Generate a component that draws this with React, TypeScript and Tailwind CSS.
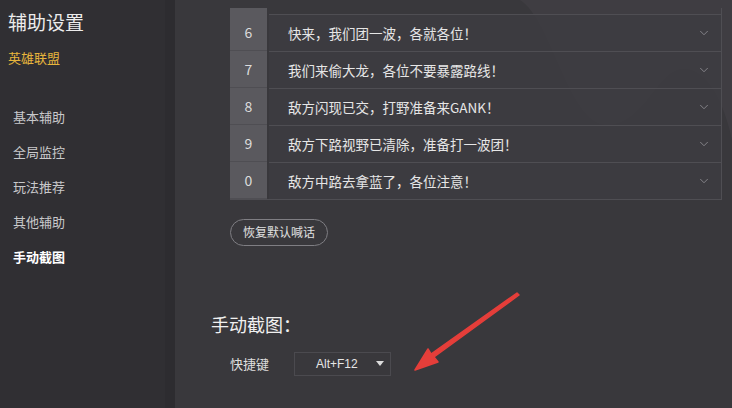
import { ChevronDown } from "lucide-react";

const font = { fontFamily: '"Noto Sans CJK SC", "Noto Sans", sans-serif' };

const shouts = [
  { key: "6", text: "快来，我们团一波，各就各位！" },
  { key: "7", text: "我们来偷大龙，各位不要暴露路线！" },
  { key: "8", text: "敌方闪现已交，打野准备来GANK！" },
  { key: "9", text: "敌方下路视野已清除，准备打一波团！" },
  { key: "0", text: "敌方中路去拿蓝了，各位注意！" },
];

const navItems = ["基本辅助", "全局监控", "玩法推荐", "其他辅助"];

function Sidebar() {
  return (
    <aside className="w-[175px] shrink-0 bg-[#302f33] border-r-[10px] border-[#2d2c30] flex flex-col">
      <h1 className="pl-[8px] pt-[9px] text-[19px] leading-[26px] text-[#ececec]">
        辅助设置
      </h1>
      <p className="pl-[8px] mt-[14px] text-[13px] leading-[18px] text-[#e7b53c]">
        英雄联盟
      </p>
      <nav className="mt-[41px] flex flex-col gap-[17px] pl-[13px]">
        {navItems.map((item) => (
          <span key={item} className="text-[13px] leading-[18px] text-[#c9c9cb]">
            {item}
          </span>
        ))}
        <span className="text-[13px] leading-[18px] font-bold text-white">
          手动截图
        </span>
      </nav>
    </aside>
  );
}

function ShoutTable() {
  return (
    <div className="relative ml-[55px] mr-[10px] mt-[8px]">
      <div className="flex flex-col border-r border-b border-[#4f4e53]">
        <div className="flex h-[6px]">
          <div className="w-[37px] bg-[#5a595e]" />
          <div className="flex-1" />
        </div>
        {shouts.map((row) => (
          <div key={row.key} className="flex h-[37px]">
            <div className="w-[37px] bg-[#5a595e] border-b border-[#4f4e53] flex items-center justify-center text-[14px] text-[#dcdcdc]">
              {row.key}
            </div>
            <div className="flex-1 ml-[2px] border-t border-[#4f4e53] bg-[#3d3c41]/80 flex items-center justify-between pl-[19px] pr-[10px]">
              <span className="text-[13.5px] text-[#e6e6e6]">{row.text}</span>
              <ChevronDown size={14} strokeWidth={1.5} className="text-[#8d8c91]" />
            </div>
          </div>
        ))}
      </div>
    </div>
  );
}

function Arrow() {
  return (
    <svg
      className="absolute left-[225px] top-[290px]"
      width="130"
      height="90"
      viewBox="0 0 130 90"
    >
      <path
        d="M119 5 L34 67 L38 72 L15 80 L28 59 L31 64 L117 3 Z"
        fill="#e53e3a"
        stroke="#e53e3a"
        strokeWidth="1.5"
        strokeLinejoin="round"
      />
    </svg>
  );
}

export default function App() {
  return (
    <div className="w-[732px] h-[408px] flex overflow-hidden bg-[#39383c]" style={font}>
      <Sidebar />
      <main className="relative flex-1 flex flex-col">
        <svg
          className="absolute left-[345px] top-0"
          width="212"
          height="210"
          viewBox="0 0 260 210"
          preserveAspectRatio="none"
        >
          <path
            d="M0 0 C40 20 60 130 110 125 C160 120 170 60 210 70 C240 78 255 120 260 140 L260 0 Z"
            fill="#4a494e"
            opacity="0.35"
          />
        </svg>
        <ShoutTable />
        <div className="relative ml-[55px] mt-[18px]">
          <button className="h-[27px] px-[12px] rounded-full border border-[#7f7e83] text-[12px] text-[#e0e0e0]">
            恢复默认喊话
          </button>
        </div>
        <h2 className="relative ml-[36px] mt-[65px] text-[18px] leading-[26px] text-[#f0f0f0]">
          手动截图：
        </h2>
        <div className="relative ml-[55px] mt-[15px] flex items-center">
          <span className="w-[64px] text-[13px] text-[#dedede]">快捷键</span>
          <div className="w-[97px] h-[24px] border border-[#4b4a4f] flex items-center justify-between pl-[21px] pr-[6px]">
            <span className="text-[12px] text-[#e6e6e6]" style={{ fontFamily: '"Liberation Sans", sans-serif' }}>
              Alt+F12
            </span>
            <svg width="8" height="5" viewBox="0 0 8 5">
              <path d="M0 0 L8 0 L4 5 Z" fill="#dcdcdc" />
            </svg>
          </div>
        </div>
        <Arrow />
      </main>
    </div>
  );
}
